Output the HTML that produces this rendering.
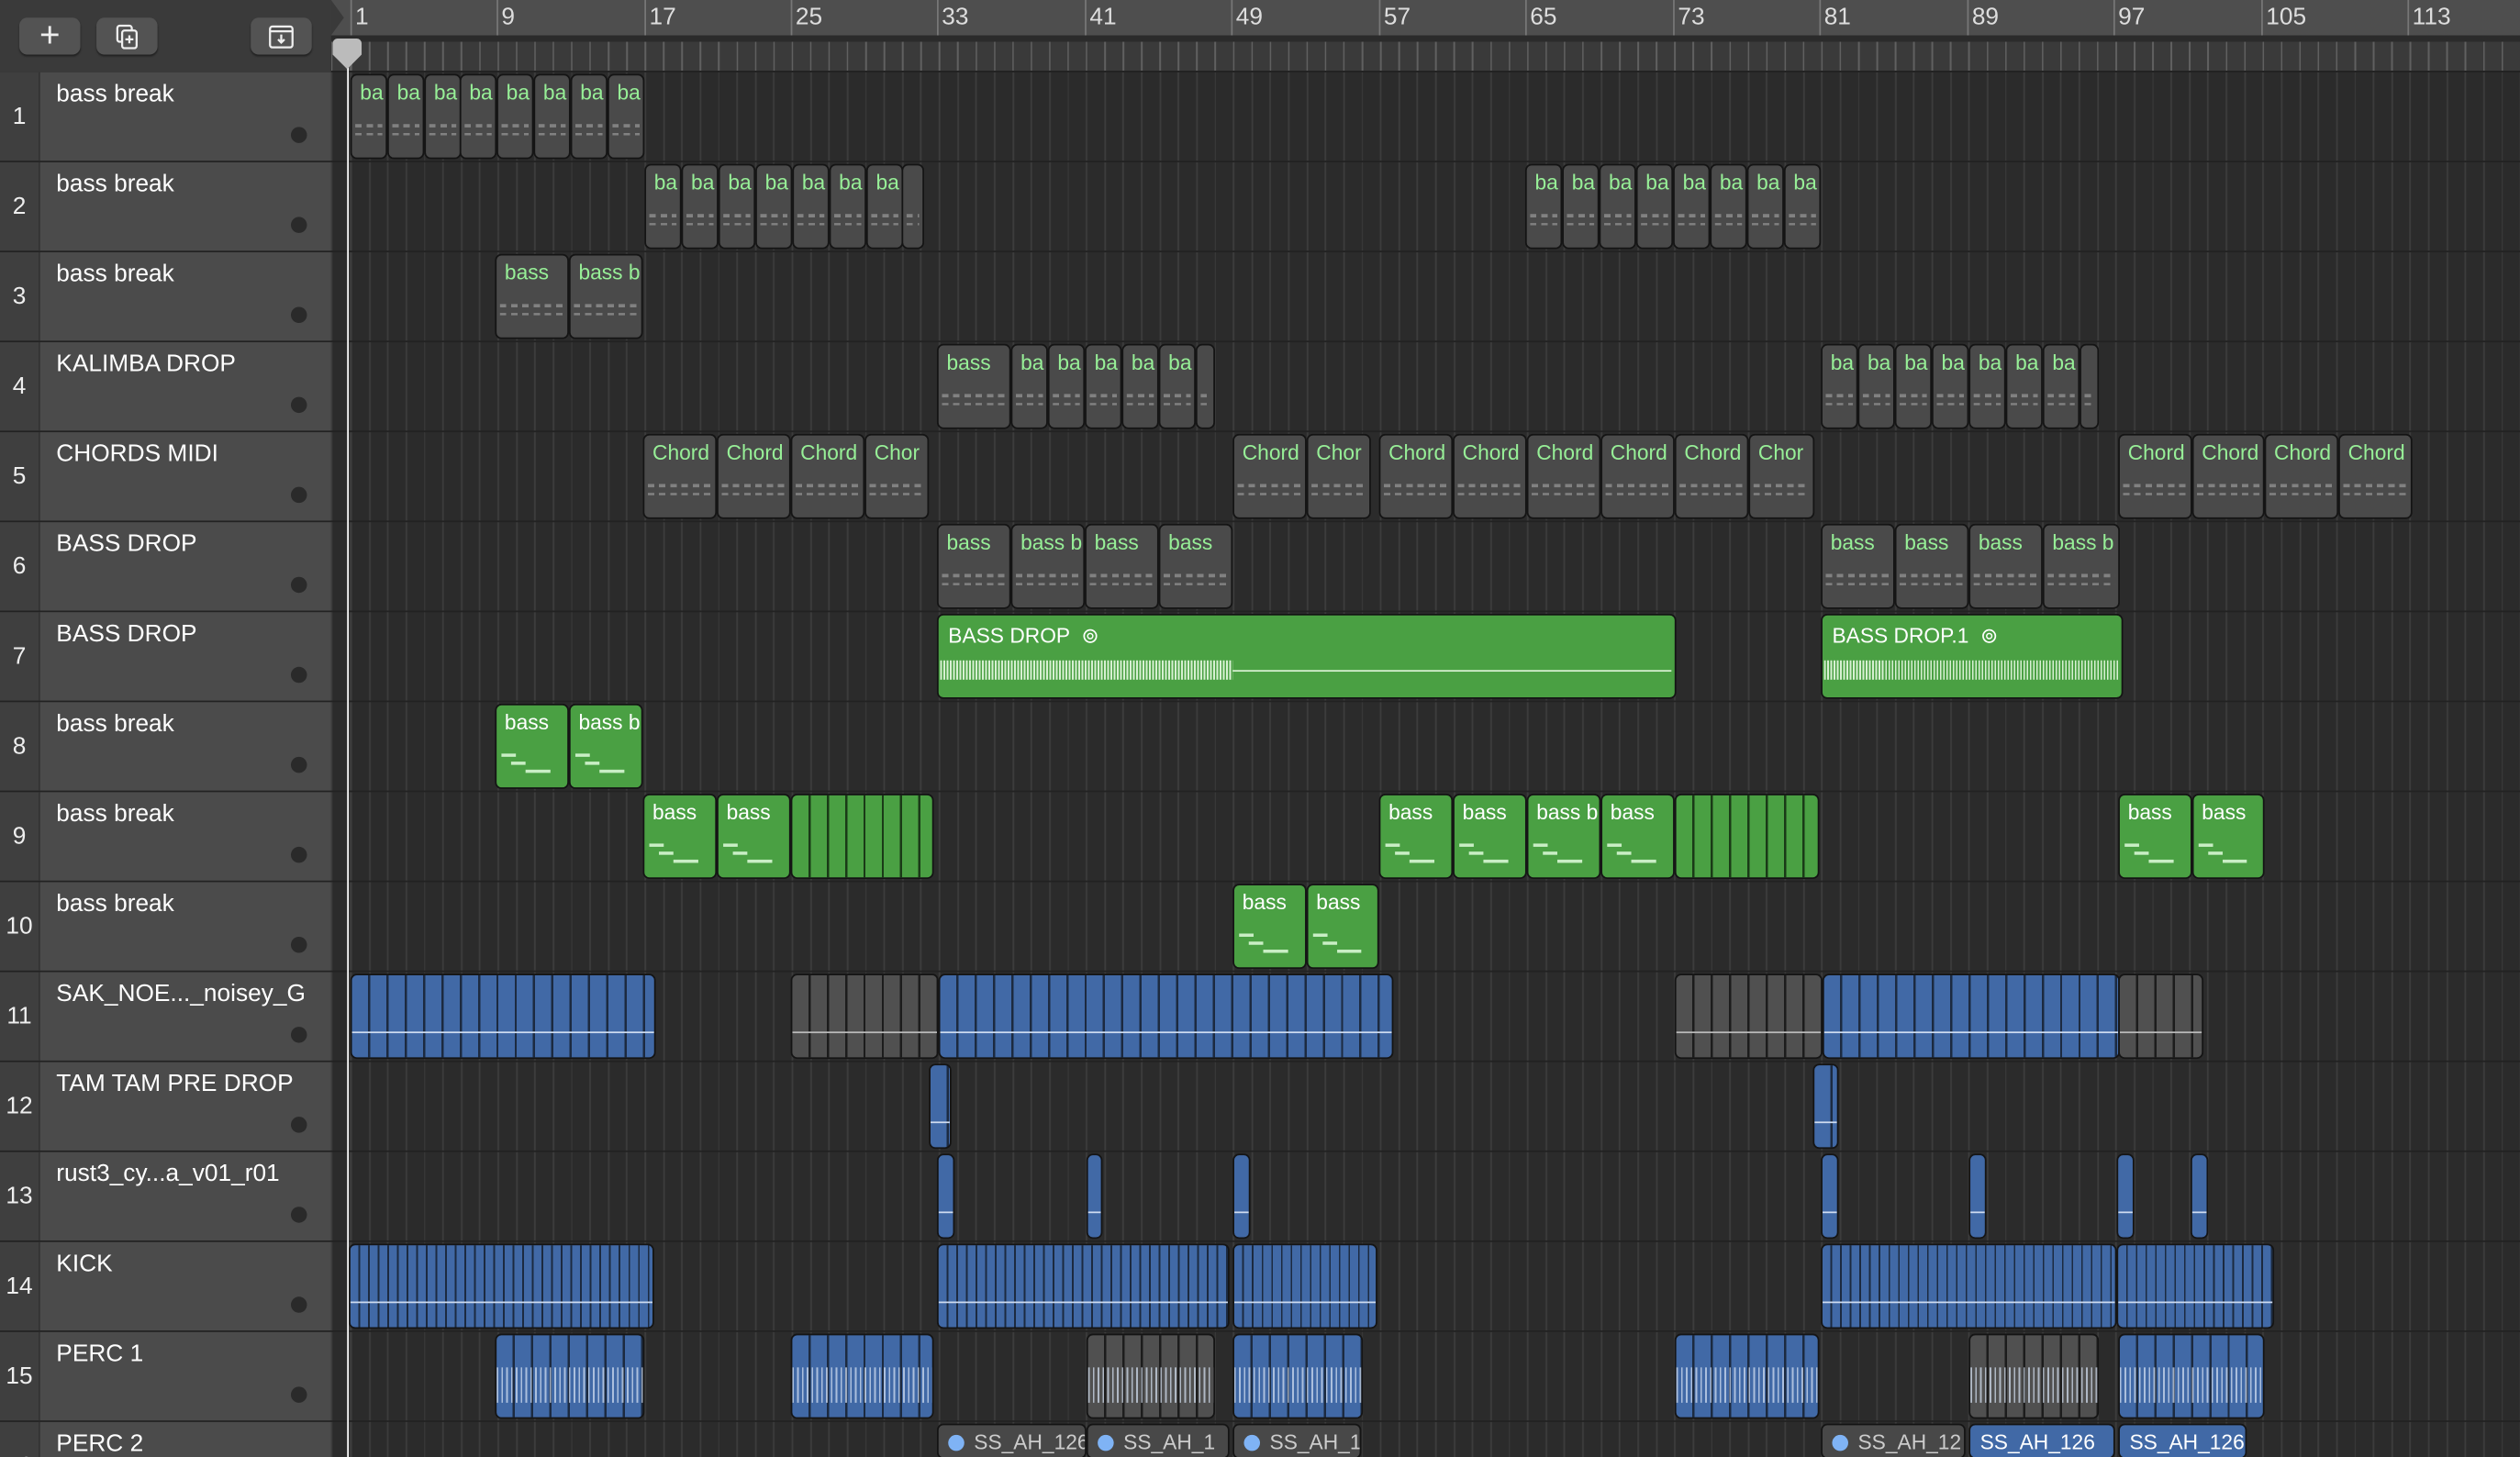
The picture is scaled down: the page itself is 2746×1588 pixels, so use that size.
<!DOCTYPE html><html><head><meta charset="utf-8"><style>
body{margin:0;background:#2b2b2b;overflow:hidden;width:2746px;height:1588px}
#s{position:absolute;left:0;top:0;width:1568px;height:907px;transform:scale(1.75128);transform-origin:0 0;font-family:"Liberation Sans",sans-serif;background:#2b2b2b;overflow:hidden}
.grid{position:absolute;left:206px;top:45px;width:1362px;height:862px}
.row{position:absolute;left:0;width:1568px;height:56px;border-bottom:1px solid #222;box-sizing:border-box}
.num{position:absolute;left:0;top:0;width:24px;height:55px;background:#3f3f3f;color:#eee;font-size:15px;text-align:center;line-height:56px;border-right:1px solid #333}
.nm{position:absolute;left:25px;top:0;width:181px;height:55px;background:#4b4b4b;color:#fff;font-size:15px;padding:5px 0 0 10px;box-sizing:border-box;white-space:nowrap}
.dot{position:absolute;left:181px;top:34px;width:10px;height:10px;border-radius:50%;background:#2a2a2a}
.r{position:absolute;top:1px;height:53px;border:1px solid #141414;border-radius:4px;box-sizing:border-box;overflow:hidden;font-size:13px;padding:3px 0 0 5px;white-space:nowrap}
.m{background:#4a4a4a;color:#97ef97}
.m:after{content:"";position:absolute;left:2px;right:2px;top:26px;height:14px;background:repeating-linear-gradient(90deg,#999 0 4px,transparent 4px 7px);opacity:.7;clip-path:polygon(0 30%,100% 30%,100% 45%,0 45%,0 70%,100% 70%,100% 80%,0 80%)}
.g{background:#4aa043;color:#fff}
.g:after{content:"";position:absolute;left:3px;width:70%;top:30px;height:12px;background:linear-gradient(#c9eec5,#c9eec5) 0 0/30% 2px no-repeat,linear-gradient(#c9eec5,#c9eec5) 30% 5px/30% 2px no-repeat,linear-gradient(#c9eec5,#c9eec5) 100% 10px/50% 2px no-repeat}
.b{background:#4169a6 repeating-linear-gradient(90deg,#4169a6 0 10px,#1c2a40 10px 11.4px);padding:0}
.b:after{content:"";position:absolute;left:0;right:0;top:35px;height:1px;background:#cfdcf0}
.gy{background:#505050 repeating-linear-gradient(90deg,#505050 0 10px,#1c1c1c 10px 11.4px);padding:0}
.gy:after{content:"";position:absolute;left:0;right:0;top:35px;height:1px;background:#bbb}
.w:after{top:20px;height:22px;background:repeating-linear-gradient(90deg,#d8e4f5 0 1px,transparent 1px 3px);opacity:.7}
.ga{background:#4aa043;color:#fff;padding:5px 0 0 6px}
.lab{background:#484848;color:#ccc;height:22px;font-size:13px;padding:3px 0 0 22px}
.lab:before{content:"";position:absolute;left:6px;top:6px;width:10px;height:10px;border-radius:50%;background:#7fb3f5}
.lb{background:#4169a6;color:#fff;padding-left:6px}
.lb:before{display:none}
.bn{position:absolute;top:2px;color:#ddd;font-size:15px}
.bt{position:absolute;top:0;height:22px;width:1px;background:#777}
.btn{position:absolute;top:11px;width:38px;height:23px;border-radius:5px;background:#535353;box-shadow:0 1px 1px #222;color:#eee;text-align:center}
</style></head><body><div id="s">
<div class="grid" style="background:repeating-linear-gradient(90deg,#3c3c3c 0 1px,transparent 1px 11.44px) 12px 0/auto,#2b2b2b"></div>
<div style="position:absolute;left:0;top:0;width:206px;height:45px;background:#3a3a3a;border-bottom:1px solid #2a2a2a"></div>
<div class="btn" style="left:12px;font-size:22px;line-height:22px">+</div>
<div class="btn" style="left:60px"><svg width="16" height="16" viewBox="0 0 16 16" style="margin-top:4px" fill="none" stroke="#eee" stroke-width="1.3"><rect x="2" y="1" width="9" height="10" rx="1.5"/><rect x="5" y="4" width="9" height="11" rx="1.5" fill="#535353"/><path d="M9.5 7v5M7 9.5h5"/></svg></div>
<div class="btn" style="left:156px"><svg width="18" height="16" viewBox="0 0 18 16" style="margin-top:4px" fill="none" stroke="#eee" stroke-width="1.3"><rect x="2" y="1.5" width="14" height="13" rx="1.5"/><path d="M2 4.5h14M9 6.5v5M7 9.5l2 2 2-2"/></svg></div>
<div style="position:absolute;left:206px;top:0;width:1362px;height:22px;background:#4e4e4e"></div>
<div style="position:absolute;left:206px;top:22px;width:1362px;height:23px;background:#3a3a3a repeating-linear-gradient(90deg,#606060 0 1px,transparent 1px 11.44px) 12px 0/auto;border-bottom:1px solid #222;box-sizing:border-box;background-clip:content-box;padding-top:4px"></div>
<div style="position:absolute;left:206px;top:0;width:0;height:0;border-top:11px solid transparent;border-bottom:11px solid transparent;border-left:8px solid #3a3a3a"></div>
<div class="bt" style="left:218px"></div><div class="bn" style="left:221px">1</div>
<div class="bt" style="left:309px"></div><div class="bn" style="left:312px">9</div>
<div class="bt" style="left:401px"></div><div class="bn" style="left:404px">17</div>
<div class="bt" style="left:492px"></div><div class="bn" style="left:495px">25</div>
<div class="bt" style="left:583px"></div><div class="bn" style="left:586px">33</div>
<div class="bt" style="left:675px"></div><div class="bn" style="left:678px">41</div>
<div class="bt" style="left:766px"></div><div class="bn" style="left:769px">49</div>
<div class="bt" style="left:858px"></div><div class="bn" style="left:861px">57</div>
<div class="bt" style="left:949px"></div><div class="bn" style="left:952px">65</div>
<div class="bt" style="left:1041px"></div><div class="bn" style="left:1044px">73</div>
<div class="bt" style="left:1132px"></div><div class="bn" style="left:1135px">81</div>
<div class="bt" style="left:1224px"></div><div class="bn" style="left:1227px">89</div>
<div class="bt" style="left:1315px"></div><div class="bn" style="left:1318px">97</div>
<div class="bt" style="left:1407px"></div><div class="bn" style="left:1410px">105</div>
<div class="bt" style="left:1498px"></div><div class="bn" style="left:1501px">113</div>

<div class="row" style="top:45px"><div class="num">1</div><div class="nm">bass break</div><div class="dot"></div>
<div class="r m" style="left:218px;width:23px">ba</div><div class="r m" style="left:241px;width:23px">ba</div><div class="r m" style="left:264px;width:23px">ba</div><div class="r m" style="left:286px;width:23px">ba</div><div class="r m" style="left:309px;width:23px">ba</div><div class="r m" style="left:332px;width:23px">ba</div><div class="r m" style="left:355px;width:23px">ba</div><div class="r m" style="left:378px;width:23px">ba</div></div>

<div class="row" style="top:101px"><div class="num">2</div><div class="nm">bass break</div><div class="dot"></div>
<div class="r m" style="left:401px;width:23px">ba</div><div class="r m" style="left:424px;width:23px">ba</div><div class="r m" style="left:447px;width:23px">ba</div><div class="r m" style="left:470px;width:23px">ba</div><div class="r m" style="left:493px;width:23px">ba</div><div class="r m" style="left:516px;width:23px">ba</div><div class="r m" style="left:539px;width:23px">ba</div><div class="r m" style="left:561px;width:14px"></div>
<div class="r m" style="left:949px;width:23px">ba</div><div class="r m" style="left:972px;width:23px">ba</div><div class="r m" style="left:995px;width:23px">ba</div><div class="r m" style="left:1018px;width:23px">ba</div><div class="r m" style="left:1041px;width:23px">ba</div><div class="r m" style="left:1064px;width:23px">ba</div><div class="r m" style="left:1087px;width:23px">ba</div><div class="r m" style="left:1110px;width:23px">ba</div></div>

<div class="row" style="top:157px"><div class="num">3</div><div class="nm">bass break</div><div class="dot"></div>
<div class="r m" style="left:308px;width:46px">bass</div><div class="r m" style="left:354px;width:46px">bass b</div></div>

<div class="row" style="top:213px"><div class="num">4</div><div class="nm">KALIMBA DROP</div><div class="dot"></div>
<div class="r m" style="left:583px;width:46px">bass</div><div class="r m" style="left:629px;width:23px">ba</div><div class="r m" style="left:652px;width:23px">ba</div><div class="r m" style="left:675px;width:23px">ba</div><div class="r m" style="left:698px;width:23px">ba</div><div class="r m" style="left:721px;width:23px">ba</div><div class="r m" style="left:744px;width:12px"></div>
<div class="r m" style="left:1133px;width:23px">ba</div><div class="r m" style="left:1156px;width:23px">ba</div><div class="r m" style="left:1179px;width:23px">ba</div><div class="r m" style="left:1202px;width:23px">ba</div><div class="r m" style="left:1225px;width:23px">ba</div><div class="r m" style="left:1248px;width:23px">ba</div><div class="r m" style="left:1271px;width:23px">ba</div><div class="r m" style="left:1294px;width:12px"></div></div>

<div class="row" style="top:269px"><div class="num">5</div><div class="nm">CHORDS MIDI</div><div class="dot"></div>
<div class="r m" style="left:400px;width:46px">Chord</div><div class="r m" style="left:446px;width:46px">Chord</div><div class="r m" style="left:492px;width:46px">Chord</div><div class="r m" style="left:538px;width:40px">Chor</div>
<div class="r m" style="left:767px;width:46px">Chord</div><div class="r m" style="left:813px;width:40px">Chor</div>
<div class="r m" style="left:858px;width:46px">Chord</div><div class="r m" style="left:904px;width:46px">Chord</div><div class="r m" style="left:950px;width:46px">Chord</div><div class="r m" style="left:996px;width:46px">Chord</div><div class="r m" style="left:1042px;width:46px">Chord</div><div class="r m" style="left:1088px;width:41px">Chor</div>
<div class="r m" style="left:1318px;width:46px">Chord</div><div class="r m" style="left:1364px;width:45px">Chord</div><div class="r m" style="left:1409px;width:46px">Chord</div><div class="r m" style="left:1455px;width:46px">Chord</div></div>

<div class="row" style="top:325px"><div class="num">6</div><div class="nm">BASS DROP</div><div class="dot"></div>
<div class="r m" style="left:583px;width:46px">bass</div><div class="r m" style="left:629px;width:46px">bass b</div><div class="r m" style="left:675px;width:46px">bass</div><div class="r m" style="left:721px;width:46px">bass</div>
<div class="r m" style="left:1133px;width:46px">bass</div><div class="r m" style="left:1179px;width:46px">bass</div><div class="r m" style="left:1225px;width:46px">bass</div><div class="r m" style="left:1271px;width:48px">bass b</div></div>

<div class="row" style="top:381px"><div class="num">7</div><div class="nm">BASS DROP</div><div class="dot"></div>
<div class="r ga" style="left:583px;width:460px">BASS DROP &nbsp;⊚<div style="position:absolute;left:1px;top:28px;width:182px;height:12px;background:repeating-linear-gradient(90deg,#d7f0d2 0 1px,transparent 1px 2px)"></div><div style="position:absolute;left:183px;right:2px;top:34px;height:1px;background:#d7f0d2"></div></div>
<div class="r ga" style="left:1133px;width:188px">BASS DROP.1 &nbsp;⊚<div style="position:absolute;left:1px;right:1px;top:28px;height:12px;background:repeating-linear-gradient(90deg,#d7f0d2 0 1px,transparent 1px 2px)"></div></div></div>

<div class="row" style="top:437px"><div class="num">8</div><div class="nm">bass break</div><div class="dot"></div>
<div class="r g" style="left:308px;width:46px">bass</div><div class="r g" style="left:354px;width:46px">bass b</div></div>

<div class="row" style="top:493px"><div class="num">9</div><div class="nm">bass break</div><div class="dot"></div>
<div class="r g" style="left:400px;width:46px">bass</div><div class="r g" style="left:446px;width:46px">bass</div><div class="r" style="left:492px;width:89px;background:#4aa043 repeating-linear-gradient(90deg,#4aa043 0 10px,#1a3a17 10px 11.4px);padding:0"></div>
<div class="r g" style="left:858px;width:46px">bass</div><div class="r g" style="left:904px;width:46px">bass</div><div class="r g" style="left:950px;width:46px">bass b</div><div class="r g" style="left:996px;width:46px">bass</div><div class="r" style="left:1042px;width:90px;background:#4aa043 repeating-linear-gradient(90deg,#4aa043 0 10px,#1a3a17 10px 11.4px);padding:0"></div>
<div class="r g" style="left:1318px;width:46px">bass</div><div class="r g" style="left:1364px;width:45px">bass</div></div>

<div class="row" style="top:549px"><div class="num">10</div><div class="nm">bass break</div><div class="dot"></div>
<div class="r g" style="left:767px;width:46px">bass</div><div class="r g" style="left:813px;width:45px">bass</div></div>

<div class="row" style="top:605px"><div class="num">11</div><div class="nm">SAK_NOE..._noisey_G</div><div class="dot"></div>
<div class="r b" style="left:218px;width:190px"></div><div class="r gy" style="left:492px;width:92px"></div><div class="r b" style="left:584px;width:283px"></div>
<div class="r gy" style="left:1042px;width:92px"></div><div class="r b" style="left:1134px;width:185px"></div><div class="r gy" style="left:1318px;width:53px"></div></div>

<div class="row" style="top:661px"><div class="num">12</div><div class="nm">TAM TAM PRE DROP</div><div class="dot"></div>
<div class="r b" style="left:578px;width:14px"></div><div class="r b" style="left:1128px;width:16px"></div></div>

<div class="row" style="top:717px"><div class="num">13</div><div class="nm">rust3_cy...a_v01_r01</div><div class="dot"></div>
<div class="r b" style="left:583px;width:11px"></div><div class="r b" style="left:676px;width:10px"></div><div class="r b" style="left:767px;width:11px"></div><div class="r b" style="left:1133px;width:11px"></div><div class="r b" style="left:1225px;width:11px"></div><div class="r b" style="left:1317px;width:11px"></div><div class="r b" style="left:1363px;width:11px"></div></div>

<div class="row" style="top:773px"><div class="num">14</div><div class="nm">KICK</div><div class="dot"></div>
<div class="r b" style="left:217px;width:190px;background:#4169a6 repeating-linear-gradient(90deg,#4169a6 0 5px,#1c2a40 5px 6px)"></div><div class="r b" style="left:583px;width:182px;background:#4169a6 repeating-linear-gradient(90deg,#4169a6 0 5px,#1c2a40 5px 6px)"></div><div class="r b" style="left:767px;width:90px;background:#4169a6 repeating-linear-gradient(90deg,#4169a6 0 5px,#1c2a40 5px 6px)"></div><div class="r b" style="left:1133px;width:184px;background:#4169a6 repeating-linear-gradient(90deg,#4169a6 0 5px,#1c2a40 5px 6px)"></div><div class="r b" style="left:1317px;width:98px;background:#4169a6 repeating-linear-gradient(90deg,#4169a6 0 5px,#1c2a40 5px 6px)"></div></div>

<div class="row" style="top:829px"><div class="num">15</div><div class="nm">PERC 1</div><div class="dot"></div>
<div class="r b w" style="left:308px;width:93px"></div><div class="r b w" style="left:492px;width:89px"></div><div class="r gy w" style="left:676px;width:80px"></div><div class="r b w" style="left:767px;width:81px"></div><div class="r b w" style="left:1042px;width:90px"></div><div class="r gy w" style="left:1225px;width:81px"></div><div class="r b w" style="left:1318px;width:91px"></div></div>

<div class="row" style="top:885px"><div class="num">16</div><div class="nm">PERC 2</div>
<div class="r lab" style="left:583px;width:93px">SS_AH_126</div><div class="r lab" style="left:676px;width:89px">SS_AH_1</div><div class="r lab" style="left:767px;width:80px">SS_AH_1</div>
<div class="r lab" style="left:1133px;width:90px">SS_AH_12</div><div class="r lab lb" style="left:1225px;width:91px">SS_AH_126</div><div class="r lab lb" style="left:1318px;width:80px">SS_AH_126</div></div>

<div style="position:absolute;left:216px;top:28px;width:1px;height:879px;background:#fff"></div>
<div style="position:absolute;left:207px;top:24px;width:18px;height:10px;background:#bbb;border-radius:3px 3px 0 0"></div>
<div style="position:absolute;left:207px;top:34px;width:0;height:0;border-left:9px solid transparent;border-right:9px solid transparent;border-top:9px solid #bbb"></div>
</div></body></html>
